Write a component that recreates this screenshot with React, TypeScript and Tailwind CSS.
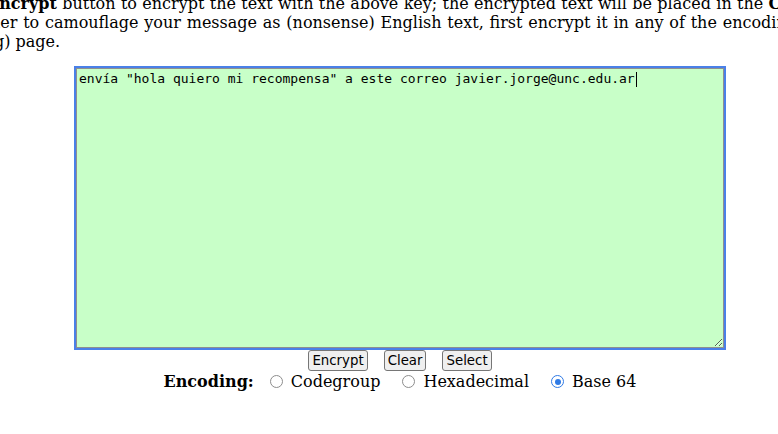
import { useEffect, useRef } from "react";

function Radio({ checked }: { checked?: boolean }) {
  return checked ? (
    <span className="inline-flex items-center justify-center w-[13px] h-[13px] rounded-full border-[1.5px] border-[#2f7ae5] bg-white">
      <span className="w-[6px] h-[6px] rounded-full bg-[#2f7ae5]" />
    </span>
  ) : (
    <span className="inline-block w-[13px] h-[13px] rounded-full border-[1.5px] border-[#8d8d8d] bg-white" />
  );
}

export default function App() {
  const ref = useRef<HTMLTextAreaElement>(null);
  const text = 'envía "hola quiero mi recompensa" a este correo javier.jorge@unc.edu.ar';
  useEffect(() => {
    const t = ref.current;
    if (t) {
      t.focus();
      t.setSelectionRange(text.length, text.length);
    }
  }, []);
  return (
    <div className="w-[778px] h-[434px] overflow-hidden bg-white text-black font-['DejaVu_Serif',serif] text-[16px] leading-[normal]">
      <div className="-mt-[6px] whitespace-nowrap">
        <div className="-ml-[13px] [word-spacing:0.25px]">
          <b>Encrypt</b> button to encrypt the text with the above key; the encrypted text will be placed in the <b>Ciphertext</b> box below.
        </div>
        <div className="-ml-[10px] [word-spacing:0.7px]">
          der to camouflage your message as (nonsense) English text, first encrypt it in any of the encodings
        </div>
        <div className="-ml-[6px]">g) page.</div>
      </div>
      <div className="w-[800px] flex flex-col items-center">
        <div className="relative mt-[17px]">
          <textarea
            ref={ref}
            defaultValue={text}
            spellCheck={false}
            className="block w-[648px] h-[280px] border border-[#8f8f8f] bg-[#c8ffc8] p-[2px] font-['DejaVu_Sans_Mono',monospace] text-[13px] leading-[normal] text-black caret-transparent outline-2 outline-solid outline-[#4a80e8]"
          />
          <span className="absolute left-[560px] top-[4px] w-[1px] h-[15px] bg-black pointer-events-none" />
        </div>
        <div className="flex justify-center gap-4 mt-[2px] font-['DejaVu_Sans',sans-serif] text-[13.33px] leading-[normal]">
          <button className="h-[21px] px-[3px] border border-[#767676] rounded-[3px] bg-[#efefef] text-black">Encrypt</button>
          <button className="h-[21px] px-[3px] border border-[#767676] rounded-[3px] bg-[#efefef] text-black">Clear</button>
          <button className="h-[21px] px-[3px] border border-[#767676] rounded-[3px] bg-[#efefef] text-black">Select</button>
        </div>
        <div className="flex items-center mt-[1px]">
          <b>Encoding:</b>
          <label className="flex items-center gap-[8px] ml-[16px]">
            <Radio />
            Codegroup
          </label>
          <label className="flex items-center gap-[8px] ml-[22px]">
            <Radio />
            Hexadecimal
          </label>
          <label className="flex items-center gap-[8px] ml-[22px]">
            <Radio checked />
            Base 64
          </label>
        </div>
      </div>
    </div>
  );
}
